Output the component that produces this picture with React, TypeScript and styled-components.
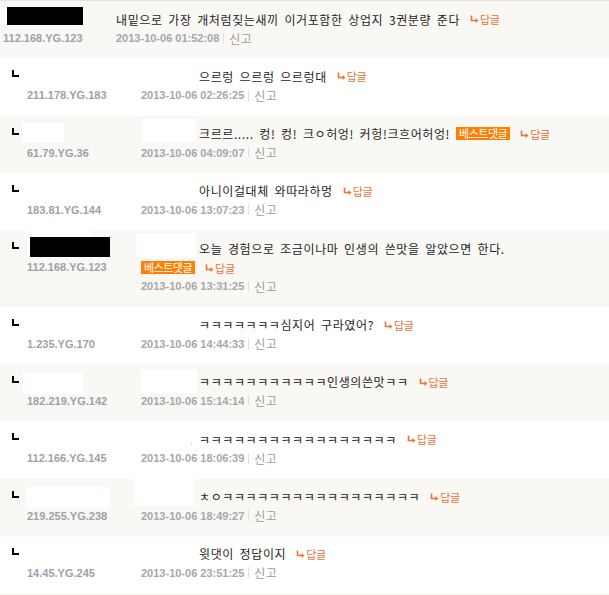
import styled, { createGlobalStyle } from 'styled-components'

const GlobalStyle = createGlobalStyle`
  body {
    margin: 0;
    background: #f9f8f4;
  }
`

type Patch = { x: number; y: number; w: number; h: number; color?: string }

type CommentData = {
  reply: boolean
  ip: string
  date: string
  text: string
  best?: 'inline' | 'below'
  patches?: Patch[]
}

const kk = (n: number) => 'ㅋ'.repeat(n)

const comments: CommentData[] = [
  {
    reply: false,
    ip: '112.168.YG.123',
    date: '2013-10-06 01:52:08',
    text: '내밑으로 가장 개처럼짖는새끼 이거포함한 상업지 3권분량 준다',
    patches: [
      { x: 0, y: 6, w: 83, h: 18, color: '#fff' },
      { x: 7, y: 6, w: 76, h: 18, color: '#000' },
    ],
  },
  {
    reply: true,
    ip: '211.178.YG.183',
    date: '2013-10-06 02:26:25',
    text: '으르렁 으르렁 으르렁대',
  },
  {
    reply: true,
    ip: '61.79.YG.36',
    date: '2013-10-06 04:09:07',
    text: '크르르..... 컹! 컹! 크ㅇ허엉! 커헝!크흐어허엉!',
    best: 'inline',
    patches: [
      { x: 22, y: 7, w: 42, h: 20 },
      { x: 142, y: 3, w: 54, h: 23 },
    ],
  },
  {
    reply: true,
    ip: '183.81.YG.144',
    date: '2013-10-06 13:07:23',
    text: '아니이걸대체 와따라하멍',
  },
  {
    reply: true,
    ip: '112.168.YG.123',
    date: '2013-10-06 13:31:25',
    text: '오늘 경험으로 조금이나마 인생의 쓴맛을 알았으면 한다.',
    best: 'below',
    patches: [
      { x: 27, y: 0, w: 64, h: 25 },
      { x: 30, y: 7, w: 80, h: 20, color: '#000' },
      { x: 136, y: 3, w: 60, h: 25 },
    ],
  },
  {
    reply: true,
    ip: '1.235.YG.170',
    date: '2013-10-06 14:44:33',
    text: kk(7) + '심지어 구라였어?',
  },
  {
    reply: true,
    ip: '182.219.YG.142',
    date: '2013-10-06 15:14:14',
    text: kk(11) + '인생의쓴맛' + kk(2),
    patches: [
      { x: 23, y: 9, w: 60, h: 21 },
      { x: 141, y: 6, w: 56, h: 23 },
    ],
  },
  {
    reply: true,
    ip: '112.166.YG.145',
    date: '2013-10-06 18:06:39',
    text: kk(17),
    patches: [{ x: 191, y: 22, w: 1, h: 1, color: '#9fb6cc' }],
  },
  {
    reply: true,
    ip: '219.255.YG.238',
    date: '2013-10-06 18:49:27',
    text: 'ㅊㅇ' + kk(17),
    patches: [
      { x: 26, y: 8, w: 84, h: 21 },
      { x: 134, y: 0, w: 60, h: 27 },
    ],
  },
  {
    reply: true,
    ip: '14.45.YG.245',
    date: '2013-10-06 23:51:25',
    text: '윗댓이 정답이지',
  },
]

const List = styled.div`
  border-top: 1px solid #e4e4e4;
  font-family: 'Noto Sans CJK KR', 'Noto Sans', sans-serif;
`

const Row = styled.div<{ $alt: boolean }>`
  position: relative;
  display: flex;
  background: ${({ $alt }) => ($alt ? '#f9f8f4' : '#ffffff')};
`

const Side = styled.div<{ $reply: boolean }>`
  flex-shrink: 0;
  box-sizing: border-box;
  width: ${({ $reply }) => ($reply ? 141 : 116)}px;
  padding-left: ${({ $reply }) => ($reply ? 12 : 3)}px;
  display: grid;
  grid-template-columns: ${({ $reply }) => ($reply ? '15px auto' : 'auto')};
  grid-template-rows: 28px 18px;
  align-content: start;
`

const Mark = styled.svg`
  display: block;
  margin-top: 12px;
`

const Ip = styled.div`
  grid-row: 2;
  grid-column: -2;
  font-family: 'Liberation Sans', Arial, sans-serif;
  font-weight: 700;
  font-size: 11px;
  line-height: 18px;
  color: #9ea1a8;
  white-space: nowrap;
`

const Body = styled.div`
  flex: 1;
  padding: 9px 0 11.33px;
`

const TextLine = styled.div<{ $indent: number }>`
  display: flex;
  align-items: center;
  height: 18px;
  padding-left: ${({ $indent }) => $indent}px;
  font-size: 12px;
  letter-spacing: 0.6px;
  word-spacing: 2.4px;
  color: #1e1e1e;
  white-space: nowrap;
`

const TagLine = styled.div`
  display: flex;
  align-items: center;
  height: 19px;
  padding-top: 2px;
  box-sizing: border-box;
`

const Badge = styled.span<{ $lead?: boolean }>`
  display: inline-block;
  margin-left: ${({ $lead }) => ($lead ? 0 : 6)}px;
  padding: 0 3px;
  background: #ff8000;
  color: #fff;
  font-size: 11px;
  line-height: 13px;
  letter-spacing: -0.5px;
  word-spacing: 0;
`

const ReplyLink = styled.span`
  display: inline-flex;
  align-items: center;
  margin-left: 10px;
  color: #e8743a;
  font-size: 11px;
  letter-spacing: -0.3px;
  word-spacing: 0;
`

const Meta = styled.div`
  display: flex;
  align-items: center;
  height: 18px;
  margin-top: 1px;
`

const DateText = styled.span`
  font-family: 'Liberation Sans', Arial, sans-serif;
  font-weight: 700;
  font-size: 11px;
  color: #a5a7ab;
`

const Sep = styled.span`
  width: 1px;
  height: 11px;
  margin: 0 5px 0 4px;
  background: #dfe1e5;
`

const Report = styled.span`
  font-size: 12px;
  letter-spacing: 0.4px;
  color: #9c9c9c;
`

const Cover = styled.div`
  position: absolute;
  pointer-events: none;
`

function ReplyMark() {
  return (
    <Mark width="7" height="7" viewBox="0 0 7 7">
      <rect x="0" y="0" width="2" height="7" fill="#000" />
      <rect x="0" y="5" width="7" height="2" fill="#000" />
    </Mark>
  )
}

function Reply() {
  return (
    <ReplyLink>
      <svg width="9" height="8" viewBox="0 0 9 8" style={{ marginRight: 1 }}>
        <path d="M1.5 0.5 V5.5 H6" stroke="#e8743a" strokeWidth="1.6" fill="none" />
        <polygon points="5.5,3 8.5,5.5 5.5,8" fill="#e8743a" />
      </svg>
      답글
    </ReplyLink>
  )
}

function Comment({ c, alt }: { c: CommentData; alt: boolean }) {
  return (
    <Row $alt={alt}>
      <Side $reply={c.reply}>
        {c.reply && <ReplyMark />}
        <Ip>{c.ip}</Ip>
      </Side>
      <Body>
        <TextLine $indent={c.reply ? 58 : 0}>
          <span>{c.text}</span>
          {c.best === 'inline' && <Badge>베스트댓글</Badge>}
          {c.best !== 'below' && <Reply />}
        </TextLine>
        {c.best === 'below' && (
          <TagLine>
            <Badge $lead>베스트댓글</Badge>
            <Reply />
          </TagLine>
        )}
        <Meta>
          <DateText>{c.date}</DateText>
          <Sep />
          <Report>신고</Report>
        </Meta>
      </Body>
      {c.patches?.map((p, i) => (
        <Cover
          key={i}
          style={{ left: p.x, top: p.y, width: p.w, height: p.h, background: p.color ?? '#fff' }}
        />
      ))}
    </Row>
  )
}

export default function App() {
  return (
    <>
      <GlobalStyle />
      <List>
        {comments.map((c, i) => (
          <Comment key={i} c={c} alt={i % 2 === 0} />
        ))}
      </List>
    </>
  )
}
